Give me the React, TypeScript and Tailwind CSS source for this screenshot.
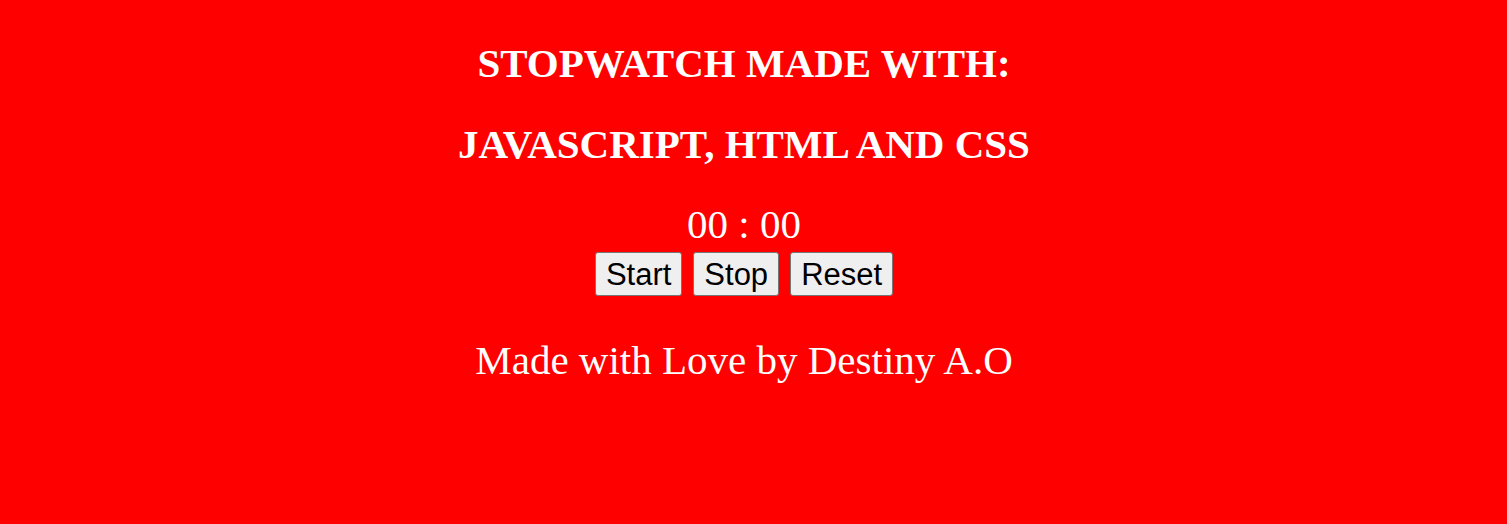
const buttons = ["Start", "Stop", "Reset"];

const App = () => {
    return (
        <main className="w-full h-[524px] bg-[#ff0000] text-white pr-[19px] flex flex-col items-center font-['Liberation_Serif',serif]">
            <h1 className="mt-[40px] text-[41px] leading-[46px] font-bold">STOPWATCH MADE WITH:</h1>
            <h1 className="mt-[35px] text-[41px] leading-[46px] font-bold">JAVASCRIPT, HTML AND CSS</h1>
            <div className="mt-[34px] text-[41px] leading-[46px]">00 : 00</div>
            <div className="mt-[5px] flex gap-[11px]">
                {buttons.map((label) => (
                    <button
                        key={label}
                        className="h-[44px] px-[10px] bg-[#efefef] border border-[#767676] rounded-[3px] text-black text-[31px] leading-none font-['Liberation_Sans',Arial,sans-serif]"
                    >
                        {label}
                    </button>
                ))}
            </div>
            <p className="mt-[41px] text-[41px] leading-[46px]">Made with Love by Destiny A.O</p>
        </main>
    );
};

export default App;
